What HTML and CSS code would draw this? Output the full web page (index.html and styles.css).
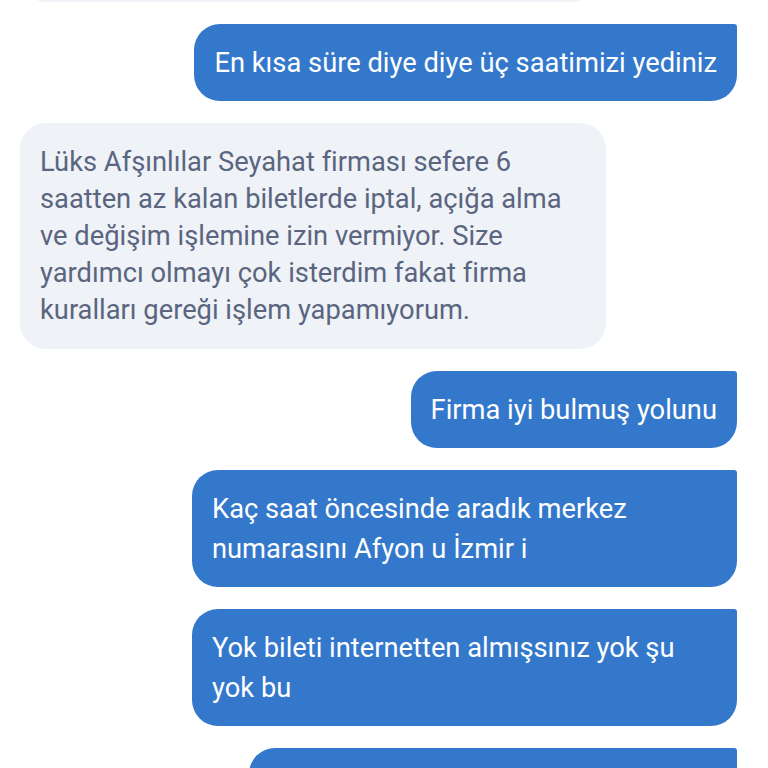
FILE: index.html
```html
<!DOCTYPE html>
<html lang="tr">
<head>
<meta charset="utf-8">
<title>Sohbet</title>
<link rel="stylesheet" href="styles.css">
</head>
<body>
<div class="viewport">
  <div class="chat">
    <div class="msg in first"></div>
    <div class="msg out">En kısa süre diye diye üç saatimizi yediniz</div>
    <div class="msg in">Lüks Afşınlılar Seyahat firması sefere 6 saatten az kalan biletlerde iptal, açığa alma ve değişim işlemine izin vermiyor. Size yardımcı olmayı çok isterdim fakat firma kuralları gereği işlem yapamıyorum.</div>
    <div class="msg out">Firma iyi bulmuş yolunu</div>
    <div class="msg out">Kaç saat öncesinde aradık merkez numarasını Afyon u İzmir i</div>
    <div class="msg out">Yok bileti internetten almışsınız yok şu yok bu</div>
    <div class="msg out last"></div>
  </div>
</div>
</body>
</html>
```
FILE: styles.css
```css
html, body {
  margin: 0;
  padding: 0;
  background: #ffffff;
}

.viewport {
  width: 768px;
  height: 768px;
  overflow: hidden;
}

.chat {
  display: flex;
  flex-direction: column;
  gap: 22px;
  padding: 0 31px 0 20px;
  margin-top: -76px;
  font-family: Roboto, "Noto Sans", "Liberation Sans", sans-serif;
  font-size: 27.3px;
}

.msg {
  box-sizing: border-box;
  padding: 19px 20px 18px;
  line-height: 40px;
}

.in {
  align-self: flex-start;
  max-width: 586px;
  padding: 21px 20px 20px;
  line-height: 37px;
  background: #eff2f7;
  color: #5a6580;
  border-radius: 26px;
}

.in.first {
  width: 577px;
  height: 78px;
  padding: 0;
}

.out {
  align-self: flex-end;
  max-width: 545px;
  background: #3478cc;
  color: #ffffff;
  border-radius: 26px 3px 26px 26px;
}

.out.last {
  width: 488px;
  height: 77px;
  padding: 0;
}
```
